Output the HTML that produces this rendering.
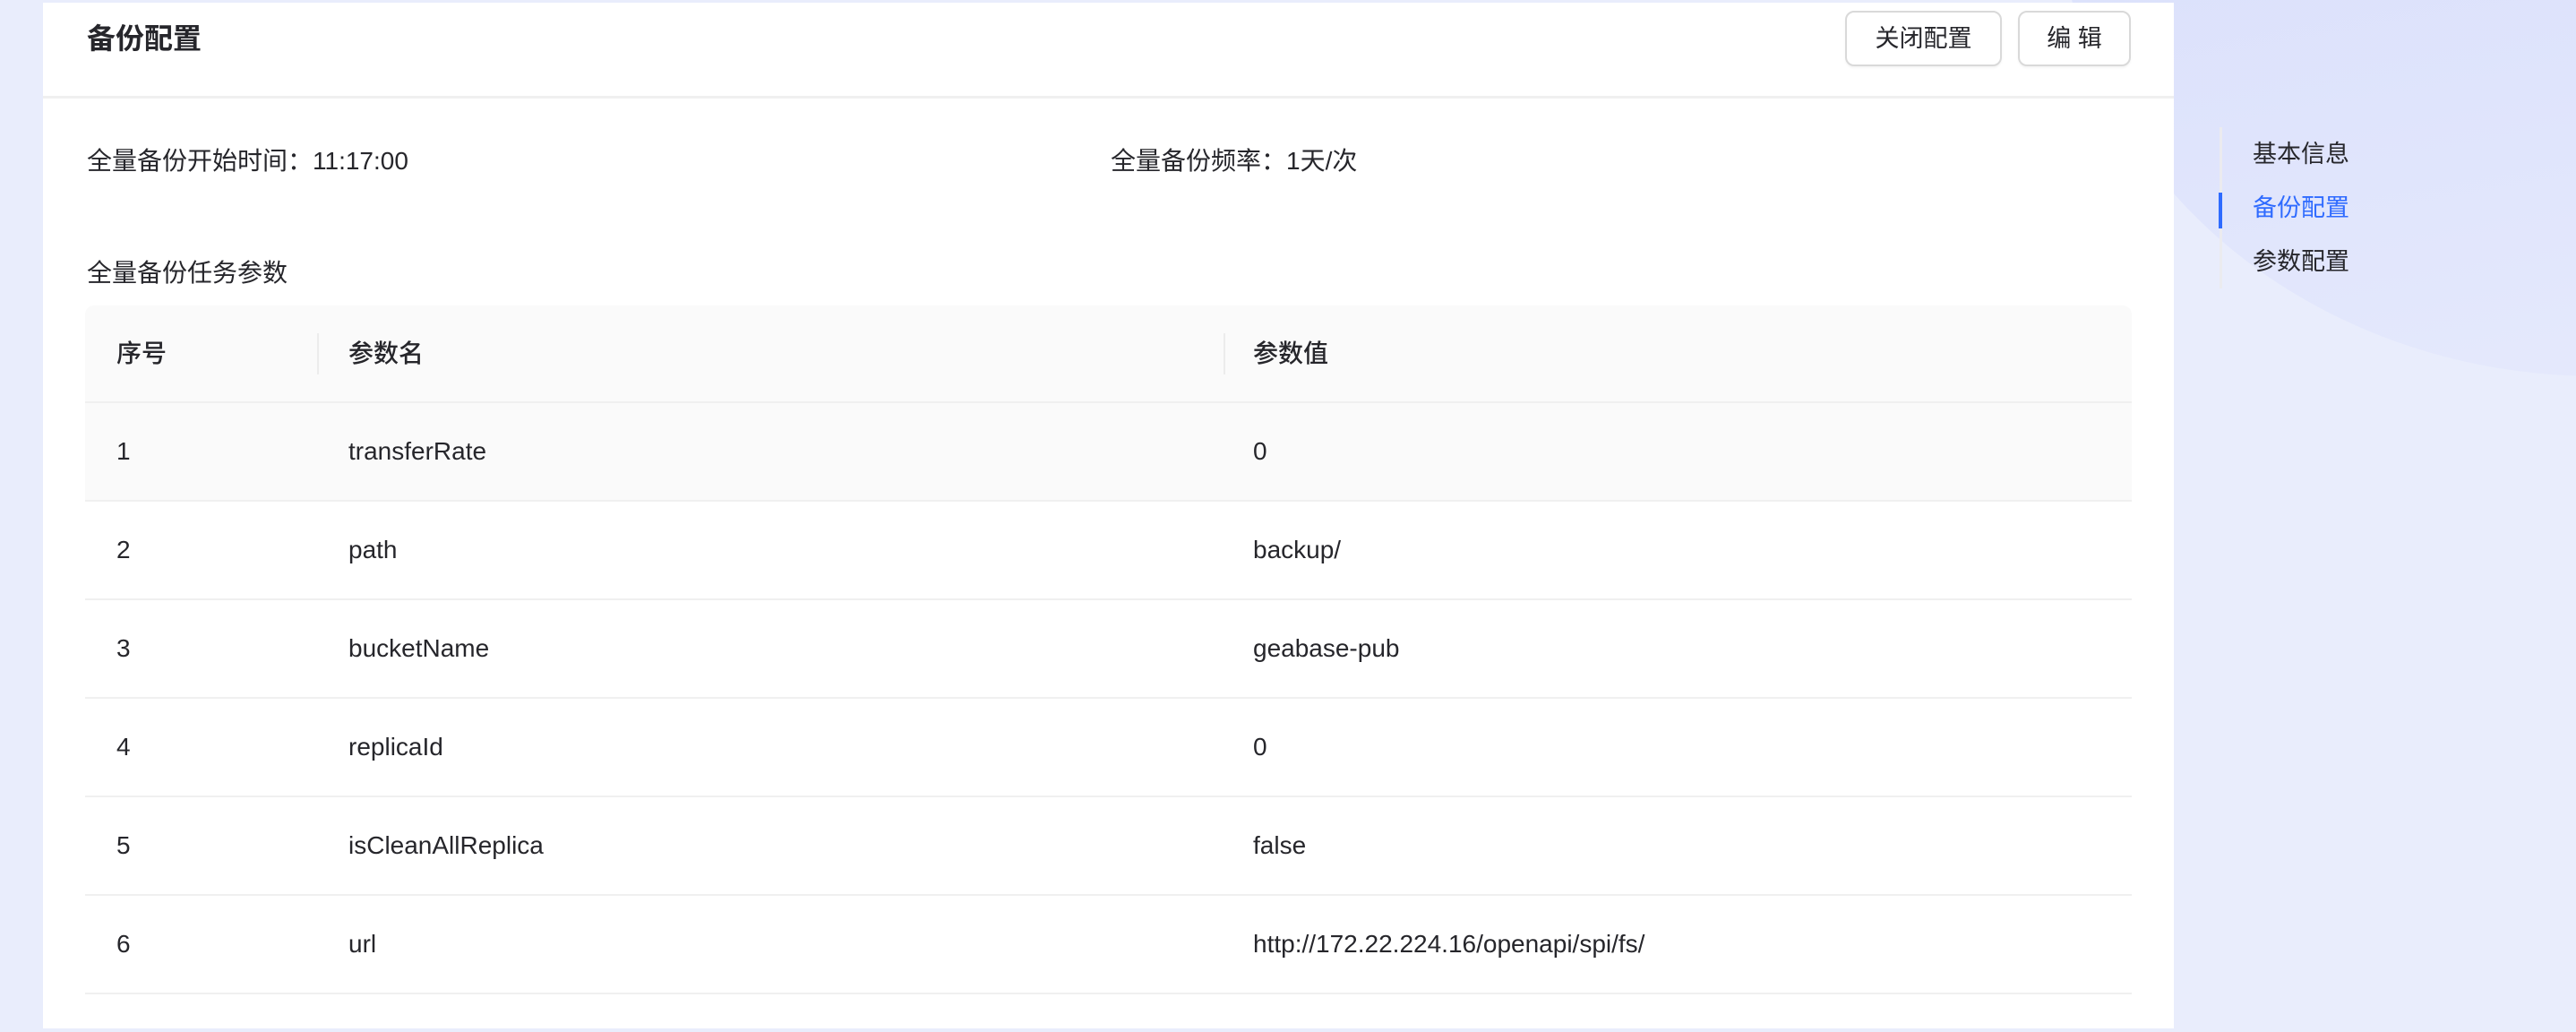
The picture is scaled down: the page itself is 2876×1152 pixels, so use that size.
<!DOCTYPE html>
<html><head><meta charset="utf-8"><style>
*{margin:0;padding:0;box-sizing:border-box}
body{width:2876px;height:1152px;overflow:hidden;background:#e9edfc;font-family:"Liberation Sans","Noto Sans CJK SC",sans-serif;color:#26262b;position:relative}
.bgc{position:absolute;left:2300px;top:-640px;width:1200px;height:1060px;border-radius:50%;background:linear-gradient(170deg,#d8defb 30%,#e6eafc)}
.card{position:absolute;left:48px;top:3px;width:2379px;height:1145px;background:#fff}
.title{position:absolute;left:49px;top:18px;font-size:32px;font-weight:600;line-height:44px}
.hdiv{position:absolute;left:0;right:0;top:104px;height:3px;background:#f0f0f0}
.btn{position:absolute;top:9px;height:62px;border:2px solid #d9d9d9;border-radius:10px;font-size:27px;line-height:58px;text-align:center;background:#fff;box-shadow:0 2px 2px rgba(0,0,0,.04)}
.t{position:absolute;font-size:28px;line-height:36px}
.tbl{position:absolute;left:47px;top:338px;width:2285px}
.hd{height:109px;background:#fafafa;border-radius:10px 10px 0 0;border-bottom:2px solid #f0f0f0;position:relative;font-weight:500}
.row{height:110px;border-bottom:2px solid #f0f0f0;position:relative}
.c{position:absolute;top:0;line-height:108px;font-size:28px}
.sep{position:absolute;top:31px;width:2px;height:46px;background:#ececec}
.nav{position:absolute;left:2478px;top:142px;width:3px;height:180px;background:#ebebef}
.bar{position:absolute;left:2477px;top:215px;width:4px;height:40px;background:#2f6bff}
.n{position:absolute;left:2515px;font-size:27px;line-height:36px}
</style></head><body>
<div class="bgc"></div>
<div class="card">
<div class="title">备份配置</div>
<div class="btn" style="left:2012px;width:175px">关闭配置</div>
<div class="btn" style="left:2205px;width:126px">编 辑</div>
<div class="hdiv"></div>
<div class="t" style="left:49px;top:159px">全量备份开始时间：11:17:00</div>
<div class="t" style="left:1192px;top:159px">全量备份频率：1天/次</div>
<div class="t" style="left:49px;top:284px">全量备份任务参数</div>
<div class="tbl">
<div class="hd"><span class="c" style="left:35px">序号</span><span class="sep" style="left:259px"></span><span class="c" style="left:294px">参数名</span><span class="sep" style="left:1271px"></span><span class="c" style="left:1304px">参数值</span></div>
<div class="row" style="background:#fafafa"><span class="c" style="left:35px">1</span><span class="c" style="left:294px">transferRate</span><span class="c" style="left:1304px">0</span></div>
<div class="row"><span class="c" style="left:35px">2</span><span class="c" style="left:294px">path</span><span class="c" style="left:1304px">backup/</span></div>
<div class="row"><span class="c" style="left:35px">3</span><span class="c" style="left:294px">bucketName</span><span class="c" style="left:1304px">geabase-pub</span></div>
<div class="row"><span class="c" style="left:35px">4</span><span class="c" style="left:294px">replicaId</span><span class="c" style="left:1304px">0</span></div>
<div class="row"><span class="c" style="left:35px">5</span><span class="c" style="left:294px">isCleanAllReplica</span><span class="c" style="left:1304px">false</span></div>
<div class="row"><span class="c" style="left:35px">6</span><span class="c" style="left:294px">url</span><span class="c" style="left:1304px">http://172.22.224.16/openapi/spi/fs/</span></div>
</div>
</div>
<div class="nav"></div><div class="bar"></div>
<div class="n" style="top:154px">基本信息</div>
<div class="n" style="top:214px;color:#2f6bff">备份配置</div>
<div class="n" style="top:274px">参数配置</div>
</body></html>
